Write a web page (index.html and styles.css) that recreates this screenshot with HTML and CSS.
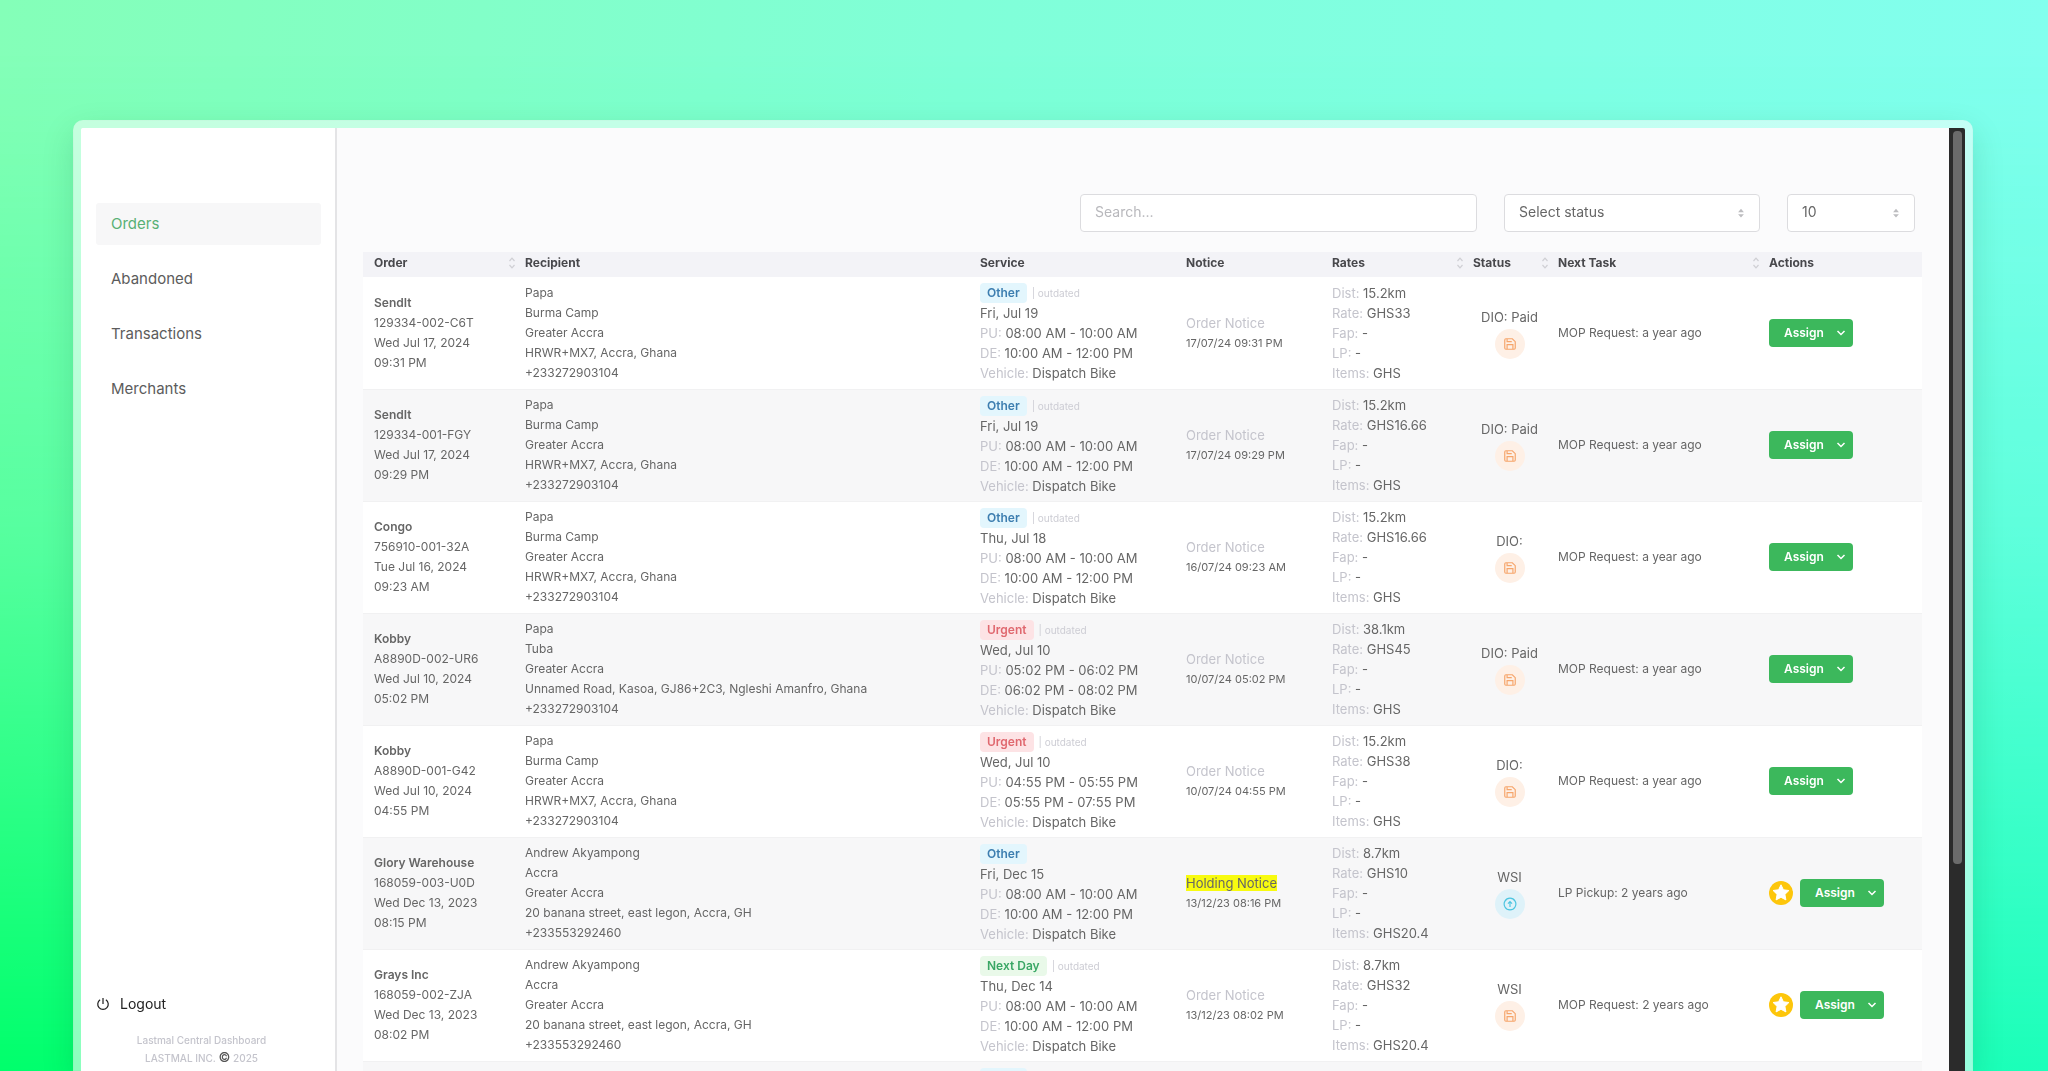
FILE: index.html
```html
<!DOCTYPE html>
<html lang="en">
<head>
<meta charset="utf-8">
<title>Lastmal Central Dashboard</title>
<link rel="stylesheet" href="styles.css">
</head>
<body>
<svg class="sprite" aria-hidden="true">
  <symbol id="sort" viewBox="0 0 8 14"><path d="M1.500 5L4 2.200L6.500 5M1.500 9L4 11.800L6.500 9" fill="none" stroke="currentColor" stroke-width="1.200"/></symbol>
  <symbol id="updown" viewBox="0 0 8 12"><path d="M.5 5L4 1L7.500 5ZM.5 7.500L4 11.500L7.500 7.500Z" fill="currentColor"/></symbol>
  <symbol id="save" viewBox="0 0 24 24"><path d="M19 21H5a2 2 0 0 1-2-2V5a2 2 0 0 1 2-2h11l5 5v11a2 2 0 0 1-2 2ZM17 21v-8H7v8M7 3v5h8" fill="none" stroke="currentColor" stroke-width="2"/></symbol>
  <symbol id="up" viewBox="0 0 24 24"><path d="M12 2a10 10 0 1 0 .01 0ZM12 17V8M8.500 11.500L12 8l3.500 3.500" fill="none" stroke="currentColor" stroke-width="2"/></symbol>
  <symbol id="star" viewBox="0 0 24 24"><circle cx="12" cy="12" r="12" fill="#fdc60b"/><path d="M12 3.800l2.400 5 5.500.7-4 3.900 1 5.500L12 16.300l-4.900 2.600 1-5.500-4-3.900 5.500-.7Z" fill="#fff" stroke="#fff" stroke-width="1" stroke-linejoin="round"/></symbol>
  <symbol id="chev" viewBox="0 0 10 8"><path d="M1.500 2L5 5.500L8.500 2" fill="none" stroke="currentColor" stroke-width="1.500"/></symbol>
  <symbol id="power" viewBox="0 0 16 16"><path d="M8 1v7M4.700 3.200a6 6 0 1 0 6.600 0" fill="none" stroke="currentColor" stroke-width="1.400"/></symbol>
</svg>
<div class="window">
  <aside class="sidebar">
    <nav class="nav">
      <a class="nav-link active" href="#orders">Orders</a>
      <a class="nav-link" href="#abandoned">Abandoned</a>
      <a class="nav-link" href="#transactions">Transactions</a>
      <a class="nav-link" href="#merchants">Merchants</a>
    </nav>
    <button class="logout" type="button"><svg class="power"><use href="#power"/></svg>Logout</button>
    <footer class="legal">
      <p>Lastmal Central Dashboard</p>
      <p>LASTMAL INC. <span class="copy">©</span> 2025</p>
    </footer>
  </aside>
  <main class="main">
    <form class="filters">
      <input class="field search" type="search" placeholder="Search..." aria-label="Search">
      <span class="picker status-picker"><select class="field" aria-label="Status"><option>Select status</option></select><svg><use href="#updown"/></svg></span>
      <span class="picker size-picker"><select class="field" aria-label="Rows per page"><option>10</option></select><svg><use href="#updown"/></svg></span>
    </form>
    <table class="orders">
      <colgroup><col class="c-order"><col><col class="c-service"><col class="c-notice"><col class="c-rates"><col class="c-status"><col class="c-task"><col class="c-actions"></colgroup>
      <thead><tr>
        <th><span class="head">Order<svg><use href="#sort"/></svg></span></th>
        <th>Recipient</th><th>Service</th><th>Notice</th>
        <th><span class="head">Rates<svg><use href="#sort"/></svg></span></th>
        <th><span class="head">Status<svg><use href="#sort"/></svg></span></th>
        <th><span class="head">Next Task<svg><use href="#sort"/></svg></span></th>
        <th>Actions</th>
      </tr></thead>
      <tbody id="rows"></tbody>
    </table>
  </main>
  <div class="track"><div class="thumb"></div></div>
</div>
<script src="orders.js"></script>
</body>
</html>
```
FILE: styles.css
```css
* { box-sizing: border-box; }
body {
  margin: 0;
  height: 100vh;
  overflow: hidden;
  padding: 120px 75px 0 73px;
  font: 13px/20px Inter, "Liberation Sans", sans-serif;
  color: #666;
  background: linear-gradient(90deg, #00ff6c, #1cffba);
}
/* Paler sky that fades out towards the bottom of the page */
body::before {
  content: "";
  position: fixed;
  inset: 0;
  z-index: -1;
  background: linear-gradient(95deg, #84ffb8, #80ffd8 45%, #82fff0);
  mask-image: linear-gradient(#000 5%, rgba(0, 0, 0, .65) 50%, transparent);
}
p { margin: 0; }
button, input, select { font: inherit; color: inherit; }
.sprite { position: absolute; width: 0; height: 0; }

.window {
  display: flex;
  height: 100%;
  border: 8px solid rgba(255, 255, 255, .55);
  border-bottom: 0;
  border-radius: 10px 10px 0 0;
  background: #fbfbfc padding-box;
  box-shadow: 0 12px 32px rgba(0, 60, 30, .15);
  overflow: hidden;
}

.sidebar {
  flex: none;
  width: 256px;
  display: flex;
  flex-direction: column;
  padding: 75px 14px 4px 15px;
  background: #fff;
  border-right: 2px solid #e4e4e6;
}
.nav { display: flex; flex-direction: column; gap: 13px; flex: 1; }
.nav-link {
  padding: 0 15px;
  font-size: 15px;
  line-height: 42px;
  border-radius: 3px;
  color: #5c5c5c;
  text-decoration: none;
}
.nav-link.active { background: #f7f7f8; color: #58b075; }
.logout {
  display: flex;
  align-items: center;
  gap: 10px;
  padding: 0;
  margin-bottom: 17px;
  border: 0;
  background: none;
  font-size: 14px;
  color: #222;
}
.power { width: 14px; height: 14px; }
.legal {
  padding-right: 14px;
  text-align: center;
  font-size: 10px;
  line-height: 18px;
  font-weight: 500;
  color: #c4c4cc;
}
.copy { color: #555; font-size: 13px; line-height: 12px; }

.main { flex: 1; min-width: 0; padding: 66px 27px 0 26px; }
.filters { display: flex; justify-content: flex-end; gap: 27px; padding-right: 7px; margin-bottom: 20px; }
.field {
  width: 100%;
  height: 38px;
  padding: 0 14px 3px;
  border: 1px solid #dcdcdf;
  border-radius: 4px;
  background: #fff;
  font-size: 14px;
  appearance: none;
  outline: 0;
}
.search { width: 397px; }
.search::placeholder { color: #b8b8bc; }
.picker { position: relative; }
.picker svg { position: absolute; right: 15px; top: 14px; width: 8px; height: 10px; color: #bdbdc0; }
.status-picker { width: 256px; }
.size-picker { width: 128px; }

.orders { width: 100%; table-layout: fixed; border-collapse: collapse; }
.c-order { width: 153px; }
.c-service { width: 206px; }
.c-notice { width: 146px; }
.c-rates { width: 141px; }
.c-status { width: 85px; }
.c-task { width: 211px; }
.c-actions { width: 162px; }
th, td { padding: 0 0 0 9px; text-align: left; }
th:first-child, td:first-child { padding-left: 11px; }
th { height: 25px; padding-bottom: 3px; font-size: 12px; font-weight: 700; color: #48484c; background: #f3f3f7; }
.head { display: flex; justify-content: space-between; align-items: center; }
.head svg { width: 8px; height: 14px; color: #cfcfd4; }
td { height: 112px; border-bottom: 1px solid #f1f1f2; white-space: nowrap; }
td:nth-child(1), td:nth-child(2), td:nth-child(7) { font-size: 12px; }
tbody tr { background: #fff; }
tbody tr:nth-child(even) { background: #f7f7f8; }
tbody td:nth-child(6) { padding-right: 3px; text-align: center; }
.name { font-weight: 600; }
.label { color: #c4c4cc; }
.note { font-size: 10px; color: #cdcdd4; }
.date { font-size: 11px; }
mark { background: #f8fb10; color: inherit; }

.tag {
  display: inline-block;
  padding: 0 7px;
  margin-right: 5px;
  border-radius: 4px;
  font-size: 12px;
  font-weight: 600;
}
.other { background: #e3f6fd; color: #3d7eb0; }
.urgent { background: #fde3e5; color: #e0686f; }
.next { background: #e9f9e9; color: #3aa765; }

.badge {
  display: flex;
  align-items: center;
  justify-content: center;
  width: 30px;
  height: 30px;
  margin: 2px auto 0;
  border-radius: 50%;
  background: #fef0e6;
  color: #f6a56b;
}
.badge.up { background: #def2f9; color: #4cc5e0; }
.badge svg { width: 14px; height: 14px; }

.actions { display: flex; align-items: center; gap: 7px; }
.star { width: 24px; height: 24px; }
.assign {
  display: flex;
  align-items: center;
  gap: 12px;
  height: 28px;
  padding: 0 7px 0 15px;
  border: 0;
  border-radius: 4px;
  background: #3cb85c;
  color: #fff;
  font-size: 12px;
  font-weight: 600;
}
.assign svg { width: 10px; height: 8px; }

.track { flex: none; width: 16px; padding: 3px 3px 0 4px; background: #2b2b2b; }
.thumb { height: 78%; border-radius: 4px; background: #6b6b6b; }
```
FILE: orders.js
```js
const burma = ["Papa", "Burma Camp", "Greater Accra", "HRWR+MX7, Accra, Ghana", "+233272903104"];
const tuba = ["Papa", "Tuba", "Greater Accra", "Unnamed Road, Kasoa, GJ86+2C3, Ngleshi Amanfro, Ghana", "+233272903104"];
const andrew = ["Andrew Akyampong", "Accra", "Greater Accra", "20 banana street, east legon, Accra, GH", "+233553292460"];
const morning = ["08:00 AM - 10:00 AM", "10:00 AM - 12:00 PM"];
const orders = [
  { order: ["SendIt", "129334-002-C6T", "Wed Jul 17, 2024", "09:31 PM"], to: burma, tag: "Other", old: true, day: "Fri, Jul 19", slots: morning, at: "17/07/24 09:31 PM", dist: "15.2km", rate: "GHS33", items: "GHS", status: "DIO: Paid", task: "MOP Request: a year ago" },
  { order: ["SendIt", "129334-001-FGY", "Wed Jul 17, 2024", "09:29 PM"], to: burma, tag: "Other", old: true, day: "Fri, Jul 19", slots: morning, at: "17/07/24 09:29 PM", dist: "15.2km", rate: "GHS16.66", items: "GHS", status: "DIO: Paid", task: "MOP Request: a year ago" },
  { order: ["Congo", "756910-001-32A", "Tue Jul 16, 2024", "09:23 AM"], to: burma, tag: "Other", old: true, day: "Thu, Jul 18", slots: morning, at: "16/07/24 09:23 AM", dist: "15.2km", rate: "GHS16.66", items: "GHS", status: "DIO:", task: "MOP Request: a year ago" },
  { order: ["Kobby", "A8890D-002-UR6", "Wed Jul 10, 2024", "05:02 PM"], to: tuba, tag: "Urgent", old: true, day: "Wed, Jul 10", slots: ["05:02 PM - 06:02 PM", "06:02 PM - 08:02 PM"], at: "10/07/24 05:02 PM", dist: "38.1km", rate: "GHS45", items: "GHS", status: "DIO: Paid", task: "MOP Request: a year ago" },
  { order: ["Kobby", "A8890D-001-G42", "Wed Jul 10, 2024", "04:55 PM"], to: burma, tag: "Urgent", old: true, day: "Wed, Jul 10", slots: ["04:55 PM - 05:55 PM", "05:55 PM - 07:55 PM"], at: "10/07/24 04:55 PM", dist: "15.2km", rate: "GHS38", items: "GHS", status: "DIO:", task: "MOP Request: a year ago" },
  { order: ["Glory Warehouse", "168059-003-U0D", "Wed Dec 13, 2023", "08:15 PM"], to: andrew, tag: "Other", day: "Fri, Dec 15", slots: morning, holding: true, at: "13/12/23 08:16 PM", dist: "8.7km", rate: "GHS10", items: "GHS20.4", status: "WSI", up: true, task: "LP Pickup: 2 years ago", star: true },
  { order: ["Grays Inc", "168059-002-ZJA", "Wed Dec 13, 2023", "08:02 PM"], to: andrew, tag: "Next Day", old: true, day: "Thu, Dec 14", slots: morning, at: "13/12/23 08:02 PM", dist: "8.7km", rate: "GHS32", items: "GHS20.4", status: "WSI", task: "MOP Request: 2 years ago", star: true },
  { order: ["Grays Inc", "168059-001-ZJA", "Wed Dec 13, 2023", "08:00 PM"], to: andrew, tag: "Other", day: "Thu, Dec 14", slots: morning, at: "13/12/23 08:00 PM", dist: "8.7km", rate: "GHS32", items: "GHS20.4", status: "WSI", task: "MOP Request: 2 years ago", star: true }
];
const tagClass = { "Other": "other", "Urgent": "urgent", "Next Day": "next" };
const line = (label, value) => `<div><span class="label">${label}:</span> ${value}</div>`;
const plain = text => `<div>${text}</div>`;

document.getElementById("rows").innerHTML = orders.map(o => `
<tr>
  <td><div class="name">${o.order[0]}</div>${o.order.slice(1).map(plain).join("")}</td>
  <td>${o.to.map(plain).join("")}</td>
  <td><div><span class="tag ${tagClass[o.tag]}">${o.tag}</span>${o.old ? '<span class="note">| outdated</span>' : ""}</div>
    ${plain(o.day)}${line("PU", o.slots[0])}${line("DE", o.slots[1])}${line("Vehicle", "Dispatch Bike")}</td>
  <td>${o.holding ? "<div><mark>Holding Notice</mark></div>" : '<div class="label">Order Notice</div>'}<div class="date">${o.at}</div></td>
  <td>${line("Dist", o.dist)}${line("Rate", o.rate)}${line("Fap", "-")}${line("LP", "-")}${line("Items", o.items)}</td>
  <td>${plain(o.status)}<span class="badge${o.up ? " up" : ""}"><svg><use href="#${o.up ? "up" : "save"}"/></svg></span></td>
  <td>${o.task}</td>
  <td><div class="actions">${o.star ? '<svg class="star"><use href="#star"/></svg>' : ""}<button class="assign" type="button">Assign<svg><use href="#chev"/></svg></button></div></td>
</tr>`).join("");
```
